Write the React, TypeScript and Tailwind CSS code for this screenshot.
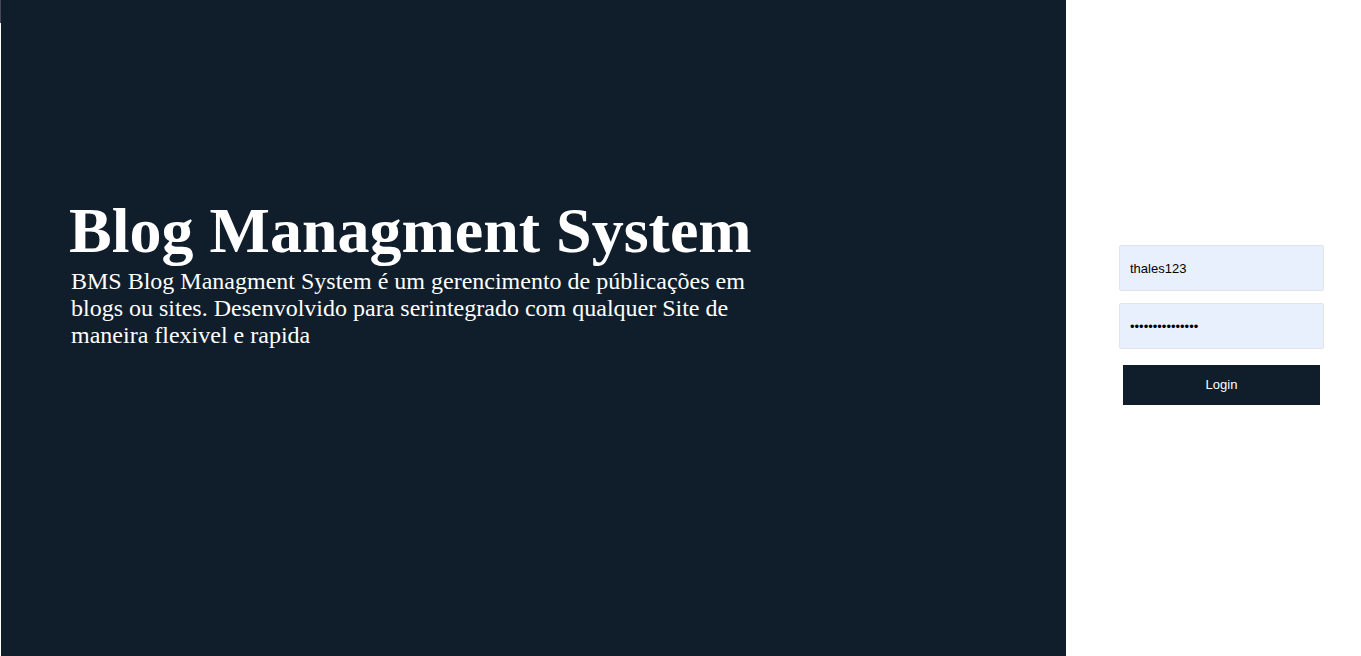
export default function App() {
  return (
    <div className="flex min-h-screen bg-white">
      <div className="w-px shrink-0">
        <div className="h-[23px] bg-[#46455a]" />
      </div>
      <main className="flex flex-1 flex-col bg-[#101e2b] pt-50 pl-17 text-white font-['Liberation_Serif',serif]">
        <h1 className="text-[64px] leading-[62px] font-bold">Blog Managment System</h1>
        <p className="max-w-[700px] pt-1.5 pl-0.5 text-2xl leading-[27px]">
          BMS Blog Managment System é um gerencimento de públicações em blogs ou sites. Desenvolvido para
          serintegrado com qualquer Site de maneira flexivel e rapida
        </p>
      </main>
      <aside className="flex w-[295px] shrink-0 flex-col items-center justify-center pb-1.5 pl-4 font-['Liberation_Sans',sans-serif] text-[13px]">
        <form className="flex w-[205px] flex-col gap-3" onSubmit={(e) => e.preventDefault()}>
          <input
            aria-label="Usuário"
            type="text"
            defaultValue="thales123"
            className="h-[46px] w-full rounded-xs border border-[#e3e4e8] bg-[#e8f0fe] px-2.5 text-black outline-none"
          />
          <input
            aria-label="Senha"
            type="password"
            defaultValue="123456789012345"
            className="h-[46px] w-full rounded-xs border border-[#e3e4e8] bg-[#e8f0fe] px-2.5 text-black outline-none"
          />
          <button type="submit" className="mx-1 mt-1 h-10 bg-[#101e2b] text-white">
            Login
          </button>
        </form>
      </aside>
    </div>
  );
}
